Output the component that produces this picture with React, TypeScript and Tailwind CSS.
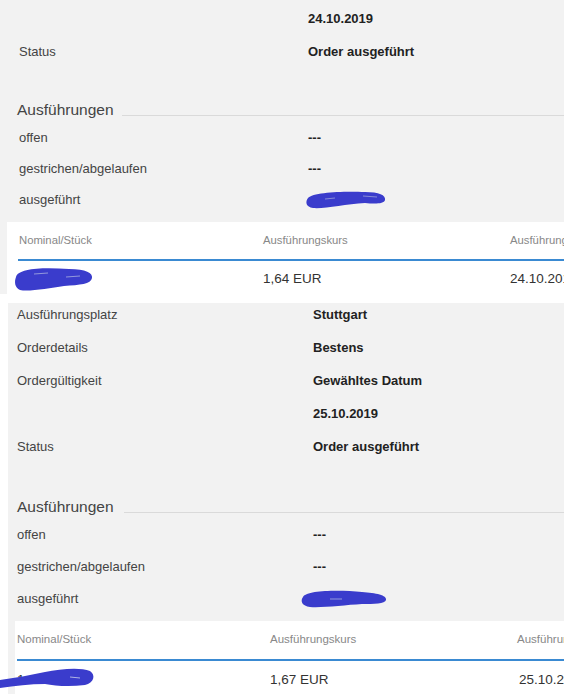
import React from "react";

const BLUE = "#3a3ccc";

function Scribble({ w, h, variant }: { w: number; h: number; variant: number }) {
  if (variant === 1) {
    return (
      <svg width={w} height={h} viewBox={`0 0 ${w} ${h}`} className="block">
        <path d="M3 7 C 8 1, 40 0, 60 1 C 74 1, 81 4, 80 9 C 79 13, 70 13, 60 12 C 40 13, 20 18, 8 17 C 1 16, 0 11, 3 7 Z" fill={BLUE} />
        <path d="M58 5 L 72 6 M20 8 L 30 7" stroke="#9aa0d8" strokeWidth="0.8" fill="none" />
      </svg>
    );
  }
  if (variant === 2) {
    return (
      <svg width={w} height={h} viewBox={`0 0 ${w} ${h}`} className="block">
        <path d="M2 11 C 4 2, 30 1, 55 3 C 72 3, 79 7, 78 12 C 77 18, 66 19, 50 20 C 35 22, 15 26, 6 24 C 1 22, 0 16, 2 11 Z" fill={BLUE} />
        <path d="M20 8 L 34 7 M52 11 L 66 10" stroke="#aab0e0" strokeWidth="0.8" fill="none" />
      </svg>
    );
  }
  if (variant === 3) {
    return (
      <svg width={w} height={h} viewBox={`0 0 ${w} ${h}`} className="block">
        <path d="M3 8 C 7 1, 40 1, 62 3 C 76 4, 87 6, 86 11 C 85 15, 74 15, 62 15 C 45 16, 22 19, 10 18 C 2 17, 0 12, 3 8 Z" fill={BLUE} />
        <path d="M30 10 L 42 10" stroke="#aab0e0" strokeWidth="0.8" fill="none" />
      </svg>
    );
  }
  return (
    <svg width={w} height={h} viewBox={`0 0 ${w} ${h}`} className="block">
      <path d="M0 13 C 15 11, 30 8, 45 5 C 60 2, 80 0, 90 4 C 96 8, 94 16, 85 18 C 70 20, 55 19, 45 17 C 30 17, 15 19, 0 21 Z" fill={BLUE} />
      <path d="M70 10 L 80 11" stroke="#b0b4e4" strokeWidth="1" fill="none" />
    </svg>
  );
}

export default function App() {
  return (
    <div className="w-[564px] h-[694px] overflow-hidden bg-white font-['Liberation_Sans',Arial,sans-serif] text-[#444] whitespace-nowrap">
      {/* Section 1 */}
      <div className="bg-[#f2f2f2] pt-[2px]">
        <div className="pl-[19px]">
          <div className="flex items-center h-[33px]">
            <div className="w-[289px] shrink-0 text-[13px]"></div>
            <div className="text-[13px] font-bold text-[#222]">24.10.2019</div>
          </div>
          <div className="flex items-center h-[33px]">
            <div className="w-[289px] shrink-0 text-[13px]">Status</div>
            <div className="text-[13px] font-bold text-[#222]">Order ausgeführt</div>
          </div>
        </div>
        <div className="h-[30px]" />
        <div className="flex items-center h-[24px] pl-[17px]">
          <span className="text-[15.5px] text-[#444]">Ausführungen</span>
          <div className="flex-1 h-px bg-[#dadada] ml-[8px] mt-[10px]" />
        </div>
        <div className="pl-[19px]">
          <div className="flex items-center h-[31px]">
            <div className="w-[289px] shrink-0 text-[13px]">offen</div>
            <div className="text-[13px] font-bold text-[#222]">---</div>
          </div>
          <div className="flex items-center h-[31px]">
            <div className="w-[289px] shrink-0 text-[13px]">gestrichen/abgelaufen</div>
            <div className="text-[13px] font-bold text-[#222]">---</div>
          </div>
          <div className="flex items-center h-[31px]">
            <div className="w-[286px] shrink-0 text-[13px]">ausgeführt</div>
            <Scribble w={82} h={18} variant={1} />
          </div>
        </div>
        <div className="h-[7px]" />
        <div className="ml-[7px] bg-white pl-[11px]">
          <div className="flex items-center h-[37px] text-[11.3px] text-[#888] pl-[1px]">
            <div className="w-[244px] shrink-0">Nominal/Stück</div>
            <div className="w-[247px] shrink-0">Ausführungskurs</div>
            <div className="shrink-0">Ausführungstag</div>
          </div>
          <div className="h-[2px] bg-[#3a8ad2]" />
          <div className="flex items-center h-[33px] pt-[3px] text-[13.5px] text-[#333] pl-[1px]">
            <div className="w-[244px] shrink-0 relative">
              <span>1</span>
              <div className="absolute left-[-5px] top-[-3px]">
                <Scribble w={80} h={26} variant={2} />
              </div>
            </div>
            <div className="w-[247px] shrink-0">1,64 EUR</div>
            <div className="shrink-0">24.10.2019</div>
          </div>
        </div>
      </div>

      <div className="h-[9px]" />

      {/* Section 2 */}
      <div className="ml-[8px] bg-[#f2f2f2]">
        <div className="pl-[9px]">
          <div className="flex items-center h-[28px] pb-[4px]">
            <div className="w-[296px] shrink-0 text-[13px]">Ausführungsplatz</div>
            <div className="text-[13px] font-bold text-[#222]">Stuttgart</div>
          </div>
          <div className="flex items-center h-[33px]">
            <div className="w-[296px] shrink-0 text-[13px]">Orderdetails</div>
            <div className="text-[13px] font-bold text-[#222]">Bestens</div>
          </div>
          <div className="flex items-center h-[33px]">
            <div className="w-[296px] shrink-0 text-[13px]">Ordergültigkeit</div>
            <div className="text-[13px] font-bold text-[#222]">Gewähltes Datum</div>
          </div>
          <div className="flex items-center h-[33px]">
            <div className="w-[296px] shrink-0 text-[13px]"></div>
            <div className="text-[13px] font-bold text-[#222]">25.10.2019</div>
          </div>
          <div className="flex items-center h-[33px]">
            <div className="w-[296px] shrink-0 text-[13px]">Status</div>
            <div className="text-[13px] font-bold text-[#222]">Order ausgeführt</div>
          </div>
        </div>
        <div className="h-[32px]" />
        <div className="flex items-center h-[24px] pl-[9px]">
          <span className="text-[15.5px] text-[#444]">Ausführungen</span>
          <div className="flex-1 h-px bg-[#dadada] ml-[10px] mt-[10px]" />
        </div>
        <div className="pl-[9px]">
          <div className="flex items-center h-[32px]">
            <div className="w-[296px] shrink-0 text-[13px]">offen</div>
            <div className="text-[13px] font-bold text-[#222]">---</div>
          </div>
          <div className="flex items-center h-[32px]">
            <div className="w-[296px] shrink-0 text-[13px]">gestrichen/abgelaufen</div>
            <div className="text-[13px] font-bold text-[#222]">---</div>
          </div>
          <div className="flex items-center h-[32px]">
            <div className="w-[283px] shrink-0 text-[13px]">ausgeführt</div>
            <Scribble w={90} h={20} variant={3} />
          </div>
        </div>
        <div className="h-[6px]" />
        <div className="ml-[7px] bg-white pl-[2px]">
          <div className="flex items-center h-[38px] text-[11.5px] text-[#888]">
            <div className="w-[253px] shrink-0">Nominal/Stück</div>
            <div className="w-[247px] shrink-0">Ausführungskurs</div>
            <div className="shrink-0">Ausführungstag</div>
          </div>
          <div className="h-[2px] bg-[#3a8ad2]" />
          <div className="flex items-center h-[38px] text-[13.5px] text-[#333]">
            <div className="w-[253px] shrink-0 relative">
              <span>1</span>
              <div className="absolute left-[-17px] top-[-3px]">
                <Scribble w={96} h={22} variant={4} />
              </div>
            </div>
            <div className="w-[249px] shrink-0">1,67 EUR</div>
            <div className="shrink-0">25.10.2019</div>
          </div>
        </div>
      </div>
    </div>
  );
}
